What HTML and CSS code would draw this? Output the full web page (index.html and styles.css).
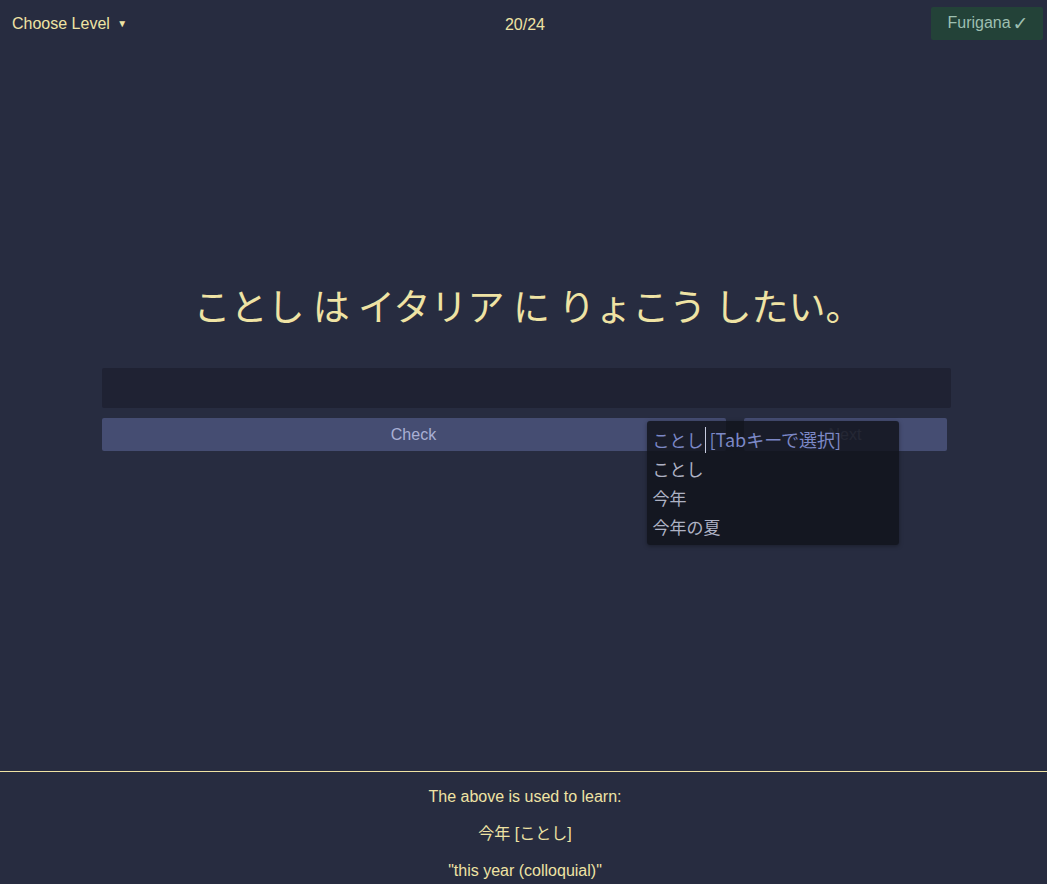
FILE: index.html
```html
<!DOCTYPE html>
<html lang="ja">
<head>
<meta charset="utf-8">
<title>Quiz</title>
<link rel="stylesheet" href="styles.css">
</head>
<body>
<div class="page">
  <header class="topbar">
    <div class="level">Choose Level <span class="caret">▼</span></div>
    <div class="count">20/24</div>
    <button class="furigana">Furigana<span class="check">✓</span></button>
  </header>
  <main class="main">
    <h1 class="sentence">ことし は イタリア に りょこう したい。</h1>
    <div class="form">
      <div class="answer"></div>
      <div class="buttons">
        <button class="btn btn-check">Check</button>
        <button class="btn btn-next">Next</button>
      </div>
      <div class="ime">
        <div class="ime-row ime-input"><span class="ime-typed">ことし</span><span class="ime-cursor"></span><span class="ime-hint">[Tabキーで選択]</span></div>
        <div class="ime-row">ことし</div>
        <div class="ime-row">今年</div>
        <div class="ime-row">今年の夏</div>
      </div>
    </div>
  </main>
  <footer class="footer">
    <p>The above is used to learn:</p>
    <p>今年 [ことし]</p>
    <p>"this year (colloquial)"</p>
  </footer>
</div>
</body>
</html>
```
FILE: styles.css
```css
html, body {
  margin: 0;
  padding: 0;
  background: #272c40;
}
body {
  font-family: "Liberation Sans", "Noto Sans CJK JP", sans-serif;
  color: #efe3a4;
  font-size: 16px;
}
.page {
  height: 884px;
  display: flex;
  flex-direction: column;
  overflow: hidden;
}
.topbar {
  height: 48px;
  display: grid;
  grid-template-columns: 1fr auto 1fr;
  align-items: start;
  padding: 7px 4px 0 12px;
  box-sizing: border-box;
}
.level {
  padding-top: 7px;
  font-size: 16px;
  line-height: 19px;
}
.caret {
  font-size: 10px;
  margin-left: 3px;
  vertical-align: 2px;
}
.count {
  padding-top: 8px;
  font-size: 16px;
  line-height: 19px;
  margin-right: 5px;
}
.furigana {
  justify-self: end;
  width: 112px;
  height: 33px;
  border: 0;
  border-radius: 2px;
  background: #234238;
  color: #9dbfb0;
  font-family: "Liberation Sans", sans-serif;
  font-size: 16px;
  padding: 0 0 2px 2px;
  display: flex;
  align-items: center;
  justify-content: center;
}
.furigana .check {
  font-size: 19px;
  margin-left: 2px;
  font-family: "DejaVu Sans", sans-serif;
}
.main {
  flex: 1;
  display: flex;
  flex-direction: column;
  align-items: center;
  border-bottom: 1px solid #efe3a4;
}
.sentence {
  margin: 232px 0 0;
  font-family: "Noto Sans CJK JP", sans-serif;
  font-weight: 400;
  font-size: 37px;
  line-height: 50px;
  color: #efe3a4;
  padding-left: 9px;
}
.form {
  position: relative;
  margin: 38px 0 0 5px;
  width: 849px;
}
.answer {
  height: 40px;
  background: #1f2233;
  border-radius: 2px;
}
.buttons {
  display: flex;
  gap: 18px;
  margin-top: 10px;
  width: 845px;
}
.btn {
  height: 33px;
  border: 0;
  border-radius: 2px;
  background: #454d72;
  color: #a9b0d4;
  font-family: "Liberation Sans", sans-serif;
  font-size: 16px;
  padding: 0;
}
.btn-check {
  width: 624px;
}
.btn-next {
  flex: 1;
  color: #8a91b4;
}
.ime {
  position: absolute;
  left: 545px;
  top: 53px;
  width: 252px;
  height: 124px;
  box-sizing: border-box;
  padding: 4px 6px;
  background: rgba(17, 19, 28, 0.84);
  border-radius: 3px;
  box-shadow: 0 1px 4px rgba(0, 0, 0, 0.35);
  font-family: "Noto Sans CJK JP", sans-serif;
  font-size: 17px;
  color: #aeb2c4;
}
.ime-row {
  height: 29px;
  line-height: 29px;
  white-space: nowrap;
}
.ime-input {
  color: #7c88c6;
  display: flex;
  align-items: center;
  font-size: 18px;
}
.ime-typed {
  font-size: 17px;
}
.ime-cursor {
  display: inline-block;
  width: 1px;
  height: 26px;
  background: #c8cce0;
  margin: 0 4px 0 1px;
}
.footer {
  height: 112px;
  padding: 6px 0 0 3px;
  box-sizing: border-box;
  text-align: center;
}
.footer p {
  margin: 0;
  height: 37px;
  line-height: 37px;
  font-size: 16px;
}
```
